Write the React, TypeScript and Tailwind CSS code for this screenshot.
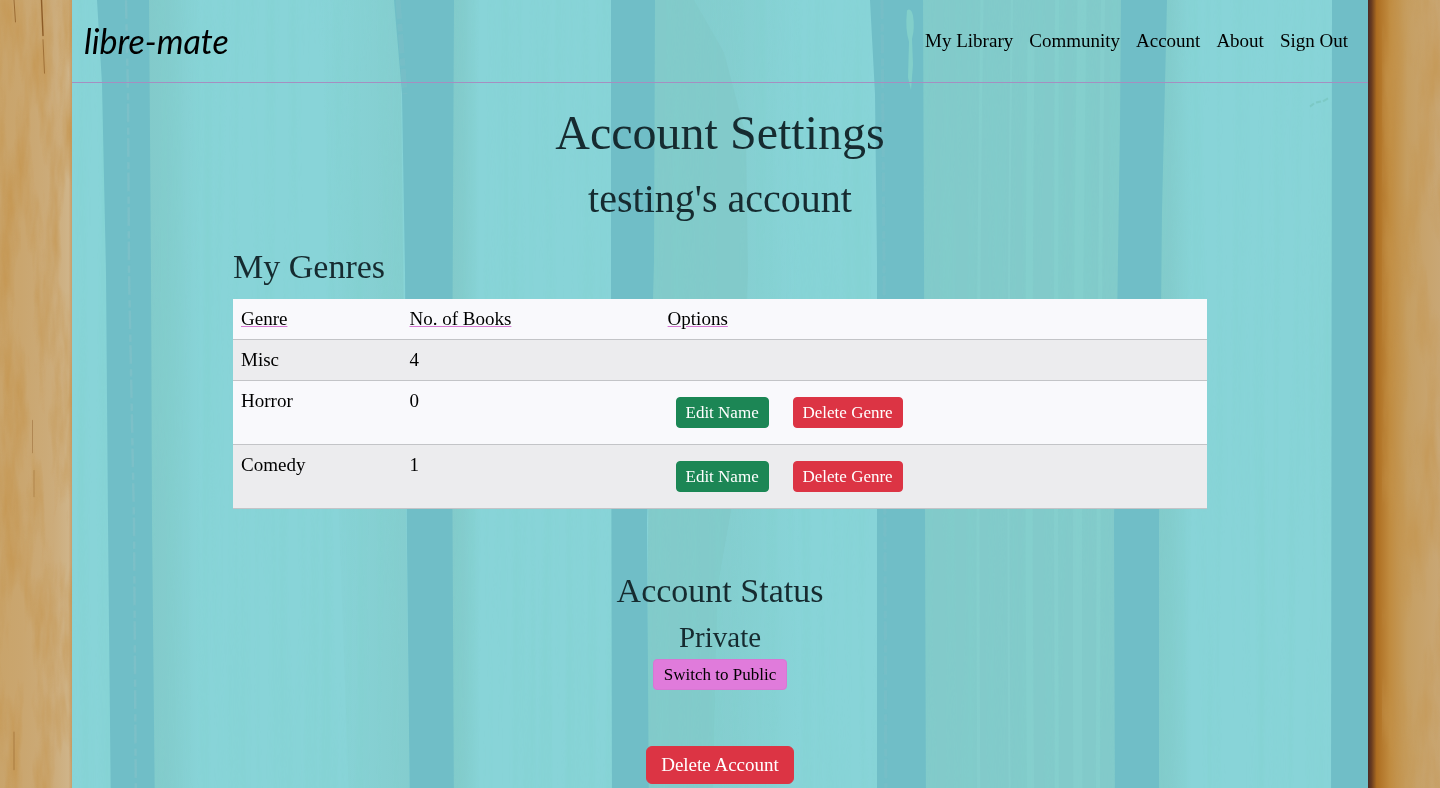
import React from "react";

const links = ["My Library", "Community", "Account", "About", "Sign Out"];

const genres = [
  { name: "Misc", books: 4, editable: false },
  { name: "Horror", books: 0, editable: true },
  { name: "Comedy", books: 1, editable: true },
];

function WoodBackdrop() {
  return (
    <svg aria-hidden="true" className="absolute inset-0 h-full w-full" viewBox="0 0 1440 788" preserveAspectRatio="none">
      <defs>
        <linearGradient id="woodLeft">
          <stop offset="0" stopColor="#c9a46b" />
          <stop offset="0.3" stopColor="#caa66f" />
          <stop offset="0.75" stopColor="#ccac7b" />
          <stop offset="0.95" stopColor="#cfb489" />
          <stop offset="1" stopColor="#c69f6c" />
        </linearGradient>
        <linearGradient id="woodRight">
          <stop offset="0" stopColor="#4a2a25" />
          <stop offset="0.05" stopColor="#6a3d20" />
          <stop offset="0.12" stopColor="#ad6d20" />
          <stop offset="0.3" stopColor="#c08b3f" />
          <stop offset="0.55" stopColor="#c69f62" />
          <stop offset="1" stopColor="#c9a775" />
        </linearGradient>
        <filter id="woodGrain" x="0" y="0" width="100%" height="100%" colorInterpolationFilters="sRGB">
          <feTurbulence type="fractalNoise" baseFrequency="0.05 0.009" numOctaves="4" seed="7" />
          <feColorMatrix values="0 0 0 0 0.77  0 0 0 0 0.58  0 0 0 0 0.3  2.4 0 0 0 -1" />
        </filter>
      </defs>
      <rect width="72" height="788" fill="url(#woodLeft)" />
      <rect x="1368" width="72" height="788" fill="url(#woodRight)" />
      <rect width="72" height="788" filter="url(#woodGrain)" opacity="0.8" />
      <rect x="1382" width="58" height="788" filter="url(#woodGrain)" opacity="0.6" />
      <g fill="none" stroke="#7d4a16" strokeLinecap="round">
        <path d="M14 0 L15.500 21" strokeWidth="1" opacity="0.6" />
        <path d="M41.500 0 L43 34" strokeWidth="1.400" opacity="0.8" />
        <path d="M43 38 L44.500 70" strokeWidth="0.900" opacity="0.6" />
        <path d="M32.500 402 V433" strokeWidth="1" opacity="0.35" />
        <path d="M34 450 V475" strokeWidth="0.900" opacity="0.35" />
        <path d="M14 700 V736" strokeWidth="1" opacity="0.4" />
      </g>
    </svg>
  );
}

function PaintedBoards() {
  return (
    <svg aria-hidden="true" className="absolute inset-0 h-full w-full" viewBox="72 0 1296 788" preserveAspectRatio="none">
      <defs>
        <linearGradient id="fadeRight">
          <stop offset="0" stopColor="#82caca" />
          <stop offset="0.4" stopColor="#82caca" stopOpacity="0.8" />
          <stop offset="1" stopColor="#82caca" stopOpacity="0" />
        </linearGradient>
        <linearGradient id="fadeLeft">
          <stop offset="0" stopColor="#82caca" stopOpacity="0" />
          <stop offset="1" stopColor="#82caca" stopOpacity="0.7" />
        </linearGradient>
        <filter id="brush" x="0" y="0" width="100%" height="100%" colorInterpolationFilters="sRGB">
          <feTurbulence type="fractalNoise" baseFrequency="0.09 0.002" numOctaves="3" seed="4" />
          <feColorMatrix values="0 0 0 0 0.5  0 0 0 0 0.82  0 0 0 0 0.8  2 0 0 0 -0.8" />
        </filter>
      </defs>
      <rect x="72" width="1296" height="788" fill="#88d4d8" />
      <path d="M146 0 H200 V788 H150 Z" fill="url(#fadeRight)" />
      <path d="M320 0 H400 L410 788 H350 Z" fill="url(#fadeLeft)" />
      <path d="M452 0 H480 V788 H452 Z" fill="url(#fadeRight)" />
      <path d="M652 0 H694 L724 50 L746 130 L748 260 L744 420 L718 560 L712 788 H646 Z" fill="#82caca" />
      <path d="M690 0 H800 V788 H712 L718 560 L744 420 L748 260 L724 50 Z" fill="url(#fadeRight)" opacity="0.7" />
      <path d="M920 0 H1124 L1117 788 H924 Z" fill="#82caca" />
      <path d="M1162 0 H1192 V788 H1156 Z" fill="url(#fadeRight)" />
      <rect x="72" width="1296" height="788" filter="url(#brush)" opacity="0.4" />
      <g fill="none" stroke="#88d3d0" opacity="0.5">
        <path d="M982 0 Q976 380 979 788" strokeWidth="3" />
        <path d="M1012 0 Q1006 380 1010 788" strokeWidth="2" />
        <path d="M1031 40 Q1027 430 1031 788" strokeWidth="7" />
        <path d="M1057 0 Q1055 400 1057 788" strokeWidth="4" />
        <path d="M1082 0 Q1076 400 1078 788" strokeWidth="9" />
        <path d="M1103 0 Q1098 400 1098 788" strokeWidth="4" />
      </g>
      <g fill="#70bec7">
        <path d="M97 0 L102 80 L106 260 L108 500 L111 788 H155 L152 500 L151 260 L149 0 Z" />
        <path d="M394 0 L402 90 L405 260 L407 520 L410 788 H454 L452 400 L454 0 Z" />
        <path d="M611 0 L611 300 L612 788 H649 L647 500 L654 250 L655 0 Z" />
        <path d="M870 0 L875 90 L877 250 L877 788 H926 L925 500 L923 0 Z" />
        <path d="M1121 0 L1120 120 L1114 500 L1115 788 H1159 L1159 500 L1162 200 L1167 0 Z" />
        <path d="M1332 0 L1331 788 H1372 V0 Z" />
      </g>
      <g fill="none" stroke="#84c2c8" strokeDasharray="18 5 7 3" opacity="0.6">
        <path d="M126 0 L128 90 L129 260 L134 500 L136 788" strokeWidth="2.500" />
        <path d="M398 0 L405 90" strokeWidth="5" opacity="0.6" />
        <path d="M882 0 L884 250 L886 788" strokeWidth="3" opacity="0.6" />
      </g>
      <path d="M907 10 q4 -3 6 5 q2 12 -1 22 l1 25 l-2 24 l-3 -12 l1 -34 q-4 -12 -2 -30 Z" fill="#82cfca" />
      <g fill="none" stroke="#78c4bd" strokeWidth="2" opacity="0.7">
        <path d="M1310 102 l4 -3 M1316 98 l5 -1 M1323 97 l5 -3" />
      </g>
    </svg>
  );
}

const smallButton = "rounded border px-2 text-[17px] leading-[29px]";

export default function App() {
  return (
    <div className="relative min-h-screen bg-[#c9a66f] font-['Liberation_Serif',serif] text-[19px] leading-6 text-black">
      <WoodBackdrop />
      <div className="relative isolate mx-auto min-h-screen w-[90%]">
        <PaintedBoards />
        <div className="relative">
          <header className="flex h-[83px] items-center justify-between border-b border-[#a58fc0] pl-3 pr-5">
            <a href="#home" className="font-['Lato',sans-serif] text-[34px] italic leading-10">
              libre-mate
            </a>
            <nav className="flex gap-4">
              {links.map((label) => (
                <a key={label} href="#">
                  {label}
                </a>
              ))}
            </nav>
          </header>

          <main className="mx-auto flex w-full max-w-[974px] flex-col pb-10 pt-6">
            <h1 className="text-center text-[48px] leading-[52px] text-[#162b30]">Account Settings</h1>
            <h2 className="mt-[18px] text-center text-[40px] leading-[44px] text-[#162b30]">testing's account</h2>
            <h3 className="mt-7 text-[34px] leading-9 text-[#162b30]">My Genres</h3>

            <table className="mt-3.5 w-full table-fixed border-collapse text-left">
              <colgroup>
                <col className="w-[17.3%]" />
                <col className="w-[26.5%]" />
                <col />
              </colgroup>
              <thead>
                <tr className="border-b border-[#c3c4c7] bg-[#f9f9fc] underline decoration-[#d678d3]">
                  <th className="p-2 font-normal">Genre</th>
                  <th className="p-2 font-normal">No. of Books</th>
                  <th className="p-2 font-normal">Options</th>
                </tr>
              </thead>
              <tbody>
                {genres.map((genre) => (
                  <tr key={genre.name} className="border-b border-[#c3c4c7] bg-[#f9f9fc] align-top odd:bg-[#ececee]">
                    <td className="p-2">{genre.name}</td>
                    <td className="p-2">{genre.books}</td>
                    <td className="p-2">
                      {genre.editable && (
                        <div className="flex gap-6 p-2">
                          <button className={`${smallButton} min-w-[93px] border-[#198754] bg-[#1c8655] text-white`}>
                            Edit Name
                          </button>
                          <button className={`${smallButton} min-w-[110px] border-[#dc3545] bg-[#dc3444] text-white`}>
                            Delete Genre
                          </button>
                        </div>
                      )}
                    </td>
                  </tr>
                ))}
              </tbody>
            </table>

            <section className="mt-16 flex flex-col items-center">
              <h3 className="text-[34px] leading-9 text-[#162b30]">Account Status</h3>
              <h4 className="mt-3 text-[29px] leading-8 text-[#162b30]">Private</h4>
              <button className={`${smallButton} mt-1.5 min-w-[134px] border-[#d678d3] bg-[#e07bdb] text-black`}>
                Switch to Public
              </button>
              <button className="mt-14 min-w-[148px] rounded-md border border-[#dc3545] bg-[#dc3444] px-3 py-1.5 text-white">
                Delete Account
              </button>
            </section>
          </main>
        </div>
      </div>
    </div>
  );
}
